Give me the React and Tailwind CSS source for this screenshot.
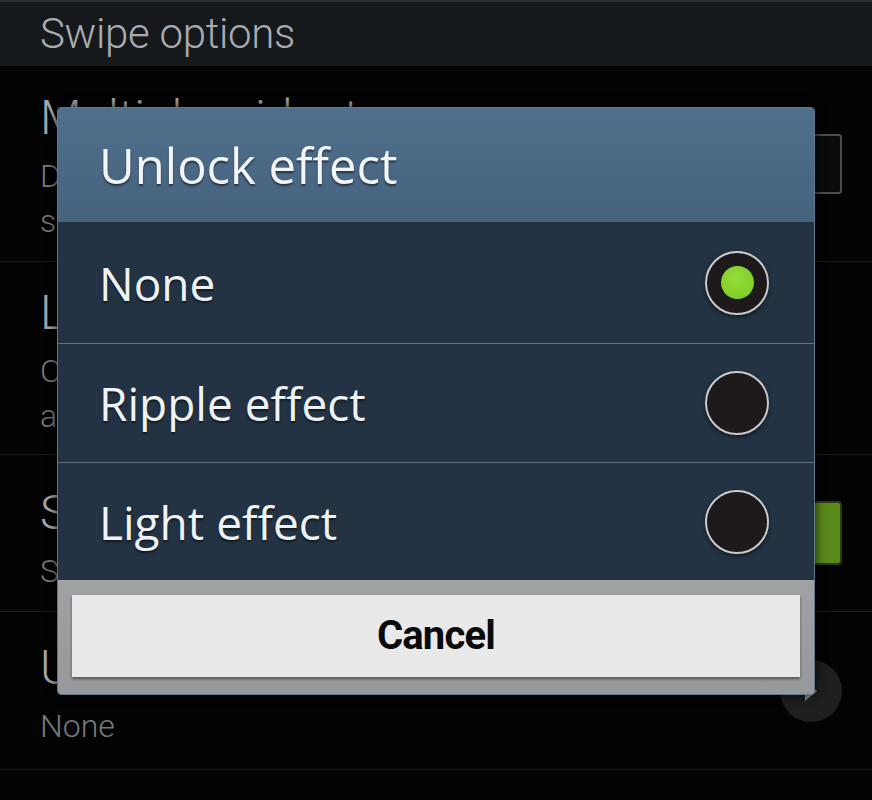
import React from 'react';

const rows = [
  { title: 'Multiple widgets', sub: ['Display widgets on lock screen and', 'swipe to see more'], widget: 'check', h: 'h-[196px]', pt: 'pt-[24px]' },
  { title: 'Lock screen widgets', sub: ['Clock or personal message, camera', 'and favourite apps'], widget: null, h: 'h-[193px]', pt: 'pt-[23px]' },
  { title: 'Shortcuts', sub: ['Set shortcuts on lock screen'], widget: 'toggle', h: 'h-[157px]', pt: 'pt-[30px]' },
  { title: 'Unlock effect', sub: ['None'], widget: 'arrow', h: 'h-[158px]', pt: 'pt-[28px]' },
];

const options = [
  { label: 'None', checked: true, h: 'h-[121px]' },
  { label: 'Ripple effect', checked: false, h: 'h-[119px] border-t border-[#5f7384]' },
  { label: 'Light effect', checked: false, h: 'h-[118px] border-t border-[#5f7384]' },
];

function Widget({ type }) {
  if (type === 'check') {
    return <div className="w-[58px] h-[60px] rounded-[3px] border-2 border-[#4a4c4e] bg-[#0b0b0b]" />;
  }
  if (type === 'toggle') {
    return <div className="w-[58px] h-[64px] rounded-[4px] border-2 border-[#2c3a14] bg-[#5a8a1c]" />;
  }
  if (type === 'arrow') {
    return (
      <div className="w-[62px] h-[62px] rounded-full bg-[#1f1f1f] flex items-center justify-center">
        <svg width="24" height="28" viewBox="0 0 24 28">
          <path d="M6 4 L18 14 L6 24 Z" fill="#8e8e8e" />
        </svg>
      </div>
    );
  }
  return null;
}

function Radio({ checked }) {
  return (
    <div className="w-[64px] h-[64px] rounded-full border-2 border-[#c9cbcc] bg-[#1e1a1c] flex items-center justify-center shadow-[0_2px_4px_rgba(0,0,0,0.5)]">
      {checked && (
        <div className="w-[33px] h-[33px] rounded-full bg-[radial-gradient(circle_at_45%_40%,#95dc3a,#7cc922)]" />
      )}
    </div>
  );
}

export default function App() {
  return (
    <div className="relative w-[872px] h-[800px] overflow-hidden bg-[#030303] font-['Roboto',sans-serif]">
      <div className="h-[66px] bg-[#16191c] border-t-2 border-[#2b2e32] flex items-center pl-[40px]">
        <span className="text-[42px] font-light text-[#a9adb1] tracking-[-0.3px] leading-none">Swipe options</span>
      </div>

      {rows.map((r) => (
        <div key={r.title} className={`${r.h} border-b border-[#1b1b1b] flex items-start justify-between pl-[40px] pr-[30px]`}>
          <div className={`${r.pt} flex flex-col`}>
            <span className="text-[48px] leading-[56px] font-light text-[#a3a7ab] whitespace-nowrap">{r.title}</span>
            <div className="mt-[8px] flex flex-col">
              {r.sub.map((s) => (
                <span key={s} className="text-[32px] leading-[45px] font-light text-[#75797d] whitespace-nowrap">{s}</span>
              ))}
            </div>
          </div>
          <div className="self-center">
            <Widget type={r.widget} />
          </div>
        </div>
      ))}

      <div className="absolute left-[57px] top-[107px] w-[758px] h-[588px] rounded-[4px] overflow-hidden border border-[#61788c] flex flex-col font-['Open_Sans',sans-serif] shadow-[0_0_12px_rgba(0,0,0,0.8)]">
        <div className="h-[114px] shrink-0 bg-gradient-to-b from-[#4f6f8c] to-[#46637e] flex items-center pl-[41px]">
          <span className="text-[49px] leading-none text-[#f2f5f7] [text-shadow:0_2px_2px_rgba(0,0,0,0.5)]">Unlock effect</span>
        </div>
        {options.map((o) => (
          <div key={o.label} className={`${o.h} shrink-0 bg-[#233343] flex items-center justify-between pl-[41px] pr-[45px]`}>
            <span className="text-[46px] leading-none text-[#eef2f5] [text-shadow:0_2px_2px_rgba(0,0,0,0.5)]">{o.label}</span>
            <Radio checked={o.checked} />
          </div>
        ))}
        <div className="flex-1 bg-gradient-to-b from-[#a0a2a4] to-[#96989a] pt-[15px] pb-[17px] px-[14px]">
          <div className="h-full bg-[#e9e9e9] shadow-[0_2px_3px_rgba(0,0,0,0.45)] flex items-center justify-center">
            <span className="font-['Roboto',sans-serif] font-bold text-[40px] leading-none text-[#0a0a0a] tracking-[-0.8px]">Cancel</span>
          </div>
        </div>
      </div>
    </div>
  );
}
